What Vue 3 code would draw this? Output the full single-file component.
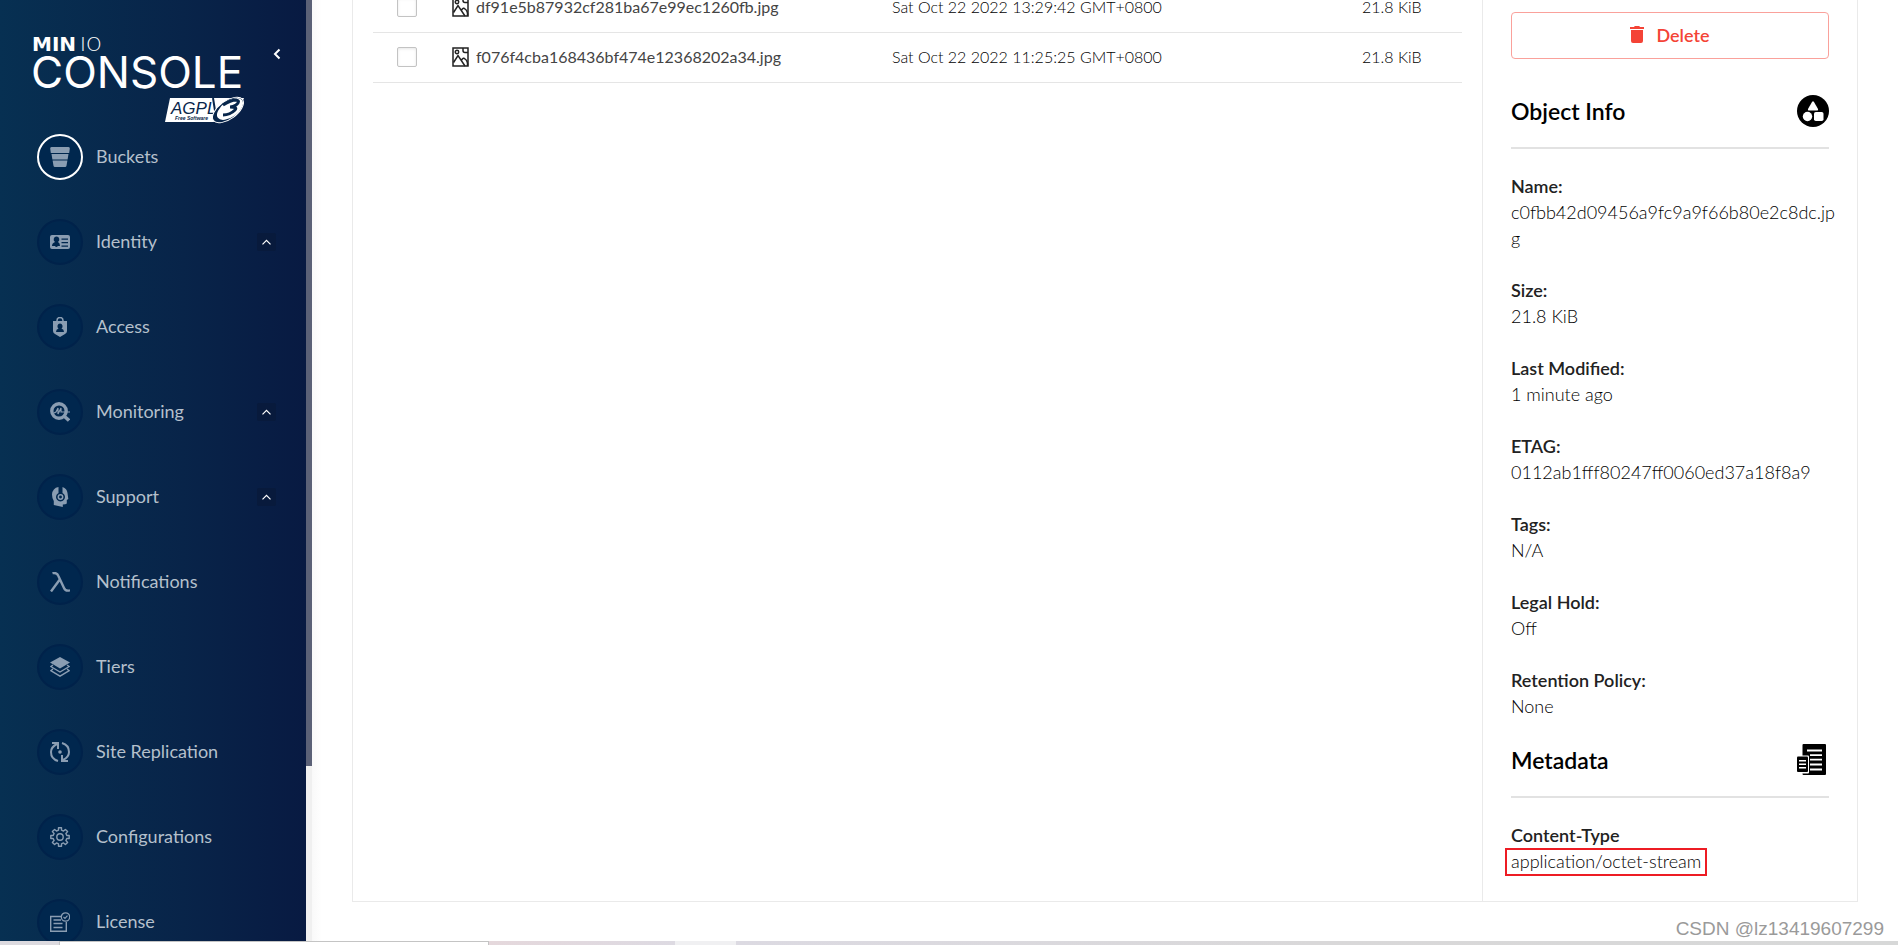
<script setup>
const navItems = [
  { label: 'Buckets', icon: 'buckets', active: true },
  { label: 'Identity', icon: 'identity', group: true },
  { label: 'Access', icon: 'access' },
  { label: 'Monitoring', icon: 'monitoring', group: true },
  { label: 'Support', icon: 'support', group: true },
  { label: 'Notifications', icon: 'lambda' },
  { label: 'Tiers', icon: 'tiers' },
  { label: 'Site Replication', icon: 'replication' },
  { label: 'Configurations', icon: 'gear' },
  { label: 'License', icon: 'license' },
]

const files = [
  { name: 'df91e5b87932cf281ba67e99ec1260fb.jpg', date: 'Sat Oct 22 2022 13:29:42 GMT+0800', size: '21.8 KiB' },
  { name: 'f076f4cba168436bf474e12368202a34.jpg', date: 'Sat Oct 22 2022 11:25:25 GMT+0800', size: '21.8 KiB' },
]

const info = [
  { label: 'Name:', value: 'c0fbb42d09456a9fc9a9f66b80e2c8dc.jpg' },
  { label: 'Size:', value: '21.8 KiB' },
  { label: 'Last Modified:', value: '1 minute ago' },
  { label: 'ETAG:', value: '0112ab1fff80247ff0060ed37a18f8a9' },
  { label: 'Tags:', value: 'N/A' },
  { label: 'Legal Hold:', value: 'Off' },
  { label: 'Retention Policy:', value: 'None' },
]
</script>

<template>
  <div class="page">
    <div class="shell">
      <aside class="sidebar">
        <div class="brand">
          <svg class="logo" viewBox="0 0 212 88" role="img" aria-label="MinIO Console AGPL v3">
            <text x="-1" y="15" class="logo-min">MIN</text>
            <text x="47" y="15" class="logo-io">IO</text>
            <text x="-2" y="52" class="logo-console">CONSOLE</text>
            <path d="M137 62H211L206 74Q196 86 180 86H132Z" fill="#fff" />
            <text x="138" y="78" class="logo-agpl">AGPL</text>
            <text x="142" y="84" class="logo-free">Free Software</text>
            <path d="M180 62l3 19L202 62" fill="none" stroke="#08264b" stroke-width="2" />
            <ellipse cx="195" cy="74" rx="18" ry="9" transform="rotate(-36 195 74)" fill="#08264b" stroke="#fff" />
            <ellipse cx="197" cy="73" rx="15" ry="8" transform="rotate(-36 197 73)" fill="#fff" />
            <path d="M190 69q8-5 13-5q5 1 0 5q-3 2-6 2q8 0 5 3q-5 5-12 5" fill="none" stroke="#08264b" stroke-width="3" />
          </svg>
          <button class="collapse" aria-label="Collapse menu">
            <svg width="8" height="12" viewBox="0 0 8 12"><path d="M6.500 1.500L2 6l4.500 4.500" fill="none" stroke="#fff" stroke-width="2" /></svg>
          </button>
        </div>
        <nav>
          <a v-for="item in navItems" :key="item.label" href="#" class="nav-item">
            <span class="nav-icon" :class="{ active: item.active }">
              <svg width="20" height="20" viewBox="0 0 20 20" fill="currentColor" aria-hidden="true">
                <template v-if="item.icon === 'buckets'">
                  <path d="M1.500 0h17q1.500 0 1.300 1.500L19.200 6H.8L.2 1.500Q0 0 1.500 0ZM1.500 7h17l-.9 5.500H2.400ZM2.600 13.500h14.800l-.9 5.200q-.2 1.300-1.500 1.300H5q-1.300 0-1.500-1.300Z" />
                </template>
                <template v-else-if="item.icon === 'identity'">
                  <path fill-rule="evenodd" d="M2 3h16q2 0 2 2v10q0 2-2 2H2q-2 0-2-2V5q0-2 2-2ZM6.500 4.500a3 3 0 0 0-1.500 5.500q-3 1-3 4h3q1 1.800 3 0h2q0-3-2-4a3 3 0 0 0-1.500-5.500ZM11.500 6.500v1.200H18V6.500ZM11.500 10v1.200H18V10ZM11.500 13.500v1.200H18v-1.200Z" />
                </template>
                <template v-else-if="item.icon === 'access'">
                  <path d="M7 5V3.500a3 3 0 0 1 6 0V5" fill="none" stroke="currentColor" stroke-width="1.500" />
                  <path fill-rule="evenodd" d="M3 4h14v10q0 2-2 3l-5 3-5-3q-2-1-2-3ZM10 6.500a2.800 2.800 0 0 0-1.500 5q-2.500.7-2.500 3.500h8q0-2.800-2.500-3.500a2.800 2.800 0 0 0-1.500-5Z" />
                </template>
                <template v-else-if="item.icon === 'monitoring'">
                  <circle cx="9" cy="9" r="7.200" fill="none" stroke="currentColor" stroke-width="3.400" />
                  <path d="M4 11l2-1 2-4v6l3-6v4h9" fill="none" stroke="currentColor" stroke-width="1.200" />
                  <path d="M14 14l5 4.500" stroke="currentColor" stroke-width="3.400" />
                </template>
                <template v-else-if="item.icon === 'support'">
                  <path d="M8.500 0v6a4.500 4.500 0 1 0 4 0V0q4.500 1.500 5 6l.8 6-1.500 1v3.500q-1 1-4 1V20l-9-2v-4Q2 11 2 7.500 2.500 1 8.500 0Z" />
                  <circle cx="10.500" cy="10" r="2.200" fill="none" stroke="currentColor" stroke-width="1.500" />
                </template>
                <template v-else-if="item.icon === 'lambda'">
                  <path d="M2.500 1.200q4.500-1 6 3L14 16q1.500 3.500 6 2.300M9.800 7.500L1 19.500" fill="none" stroke="currentColor" stroke-width="2.400" />
                </template>
                <template v-else-if="item.icon === 'tiers'">
                  <path d="M10 0l10 5.500L10 11.500 0 5.500Z" />
                  <path d="M3 8L.8 9.500 10 15l9.200-5.500L17 8M3 12L.8 13.700 10 19.200l9.200-5.500L17 12" fill="none" stroke="currentColor" stroke-width="1.400" />
                </template>
                <template v-else-if="item.icon === 'replication'">
                  <path d="M8 19Q1 17 1 10Q1 5 7 2M12 1Q19 3 19 10Q19 15 13 18" fill="none" stroke="currentColor" stroke-width="2" />
                  <path d="M2 1h6v6M18 19h-6v-6" fill="none" stroke="currentColor" stroke-width="2" />
                  <circle cx="10" cy="10" r="1.800" />
                </template>
                <template v-else-if="item.icon === 'gear'">
                  <path d="M8.500.8h3v2.400l2 .9 1.900-1.700 2.200 2.200-1.700 1.900.9 2h2.400v3h-2.400l-.9 2 1.700 1.900-2.200 2.200-1.900-1.700-2 .9v2.400h-3v-2.400l-2-.9-1.900 1.700-2.200-2.200 1.700-1.900-.9-2H.8v-3h2.400l.9-2-1.700-1.900 2.200-2.200 1.900 1.700 2-.9Z" fill="none" stroke="currentColor" stroke-width="1.400" stroke-linejoin="round" />
                  <circle cx="10" cy="10" r="3.200" fill="none" stroke="currentColor" stroke-width="1.400" />
                </template>
                <template v-else>
                  <path d="M11 4.500H.7v14.700h15.600V10M3.500 8H11M3.500 11.500h9M3.500 15.500h9" fill="none" stroke="currentColor" stroke-width="1.400" />
                  <circle cx="15.500" cy="5" r="4.200" fill="none" stroke="currentColor" stroke-width="1.300" />
                  <path d="M13.500 5l1.500 1.500 2.500-2.800" fill="none" stroke="currentColor" stroke-width="1.200" />
                </template>
              </svg>
            </span>
            <span class="nav-label">{{ item.label }}</span>
            <span v-if="item.group" class="chevron">
              <svg width="9" height="6" viewBox="0 0 9 6" aria-hidden="true"><path d="M.5 5.300l4-4 4 4" fill="none" stroke="#fff" stroke-width="1.200" /></svg>
            </span>
          </a>
        </nav>
      </aside>
      <div class="scrollbar"><div class="thumb"></div></div>

      <main class="content">
        <section class="browser">
          <div class="list">
            <table>
              <tbody>
                <tr v-for="f in files" :key="f.name">
                  <td class="c-check"><input type="checkbox" :aria-label="'Select ' + f.name" /></td>
                  <td class="c-name">
                    <span class="file">
                      <svg width="17" height="20" viewBox="0 0 17 20" fill="none" stroke="#222" stroke-width="1.500" aria-hidden="true">
                        <path d="M11 1H1v18h15V6M11 .5v3q0 2 2 2h3.500M11 1l5 0v5" />
                        <circle cx="5" cy="5" r="1.700" />
                        <path d="M1.500 15.500l4.500-7 7 10.500M9.500 13q2-3 3.500-1 3 2 2.500 7" />
                      </svg>
                      <span>{{ f.name }}</span>
                    </span>
                  </td>
                  <td class="c-date">{{ f.date }}</td>
                  <td class="c-size">{{ f.size }}</td>
                </tr>
              </tbody>
            </table>
          </div>

          <aside class="details">
            <button class="delete">
              <svg width="14" height="17" viewBox="0 0 14 17" fill="currentColor" aria-hidden="true"><path d="M0 1h4l.8-1h4.400L10 1h4v2H0ZM1 4h12v11q0 2-2 2H3q-2 0-2-2Z" /></svg>
              <span>Delete</span>
            </button>
            <header class="heading first">
              <h2>Object Info</h2>
              <svg width="32" height="32" viewBox="0 0 32 32" aria-hidden="true">
                <circle cx="16" cy="16" r="16" />
                <path d="M15 7q1-1.500 2 0l4 7q.6 1.500-1 1.500h-8q-1.600 0-1-1.500Z" fill="#fff" />
                <circle cx="10.500" cy="21.500" r="4.700" fill="#fff" />
                <rect x="17" y="17" width="9.500" height="9" rx="1.800" fill="#fff" />
              </svg>
            </header>
            <dl>
              <div v-for="row in info" :key="row.label">
                <dt>{{ row.label }}</dt>
                <dd>{{ row.value }}</dd>
              </div>
            </dl>
            <header class="heading">
              <h2>Metadata</h2>
              <svg width="32" height="32" viewBox="0 0 32 32" aria-hidden="true">
                <rect x="5.500" y="0" width="23.500" height="31" rx="1" />
                <path d="M10 6.500h15M13 11.200h12M13 15.700h12M13 20.500h12M13 25.500h12" stroke="#fff" stroke-width="1.800" />
                <rect x="-1" y="11.500" width="13" height="18" rx="1" fill="#fff" />
                <rect x="0" y="12.500" width="11" height="15.500" rx="1" />
                <path d="M2 16.800h7M2 20.300h7M2 23.800h7" stroke="#fff" stroke-width="1.400" />
              </svg>
            </header>
            <dl>
              <div>
                <dt>Content-Type</dt>
                <dd><span class="marked">application/octet-stream</span></dd>
              </div>
            </dl>
          </aside>
        </section>
      </main>
    </div>
    <div class="taskbar"><div class="tab"></div><div class="strip-a"></div><div class="strip-b"></div><div class="strip-c"></div></div>
    <div class="watermark">CSDN @lz13419607299</div>
  </div>
</template>

<style>
html, body { margin: 0; overflow: hidden; }
</style>

<style scoped>
* { box-sizing: border-box; }
.page { position: relative; height: 100vh; display: flex; flex-direction: column; overflow: hidden; background: #fff; font-family: Lato, "Liberation Sans", sans-serif; color: #222; }
.shell { flex: 1; min-height: 0; display: flex; overflow: hidden; }

.sidebar { flex: 0 0 306px; overflow: hidden; background: linear-gradient(90deg, #073052 0%, #082449 60%, #081a42 100%); }
.brand { display: flex; align-items: flex-start; justify-content: space-between; height: 134px; padding: 36px 25px 0 33px; }
.logo { width: 212px; height: 88px; overflow: visible; fill: #fff; }
.logo-min { font: 700 20px "DejaVu Sans", sans-serif; }
.logo-io { font: 200 20px "DejaVu Sans", sans-serif; }
.logo-console { font: 400 44px Inter, sans-serif; }
.logo-agpl { font: italic 400 17px "Liberation Sans", sans-serif; fill: #08264b; }
.logo-free { font: italic 700 5px "Liberation Sans", sans-serif; fill: #08264b; }
.collapse { display: flex; margin-top: 12px; padding: 0; border: 0; background: none; }
.nav-item { display: flex; align-items: center; height: 46px; margin-bottom: 39px; padding: 0 30px 0 37px; color: #b5c0cc; text-decoration: none; }
.nav-icon { flex: none; display: flex; align-items: center; justify-content: center; width: 46px; height: 46px; border: 2px solid #00224a; border-radius: 50%; background: #00274e; color: #8a9db2; }
.nav-icon.active { border-color: #fff; }
.nav-label { flex: 1; margin-left: 13px; padding-bottom: 2px; font-size: 18px; line-height: 24px; }
.chevron { display: flex; align-items: center; justify-content: center; width: 19px; height: 18px; border-radius: 2px; background: #081a3c; }

.scrollbar { flex: 0 0 6px; background: #f0f0f0; }
.thumb { height: 766px; background: #5b6177; }

.content { flex: 1; min-width: 0; padding: 0 40px 39px; background: linear-gradient(90deg, #f9f9f9 0, #fff 10px); }
.browser { display: flex; height: 100%; border: 1px solid #eaeaea; border-top: 0; }
.list { flex: 1; min-width: 0; padding: 0 20px; }
table { width: 100%; margin-top: -17px; border-collapse: separate; border-spacing: 0; table-layout: fixed; }
td { height: 50px; padding: 0 0 2px; border-bottom: 1px solid #e5e5e5; font-size: 16px; font-weight: 300; color: #000; white-space: nowrap; vertical-align: middle; }
.c-check { width: 79px; padding-left: 24px; }
.c-date { width: 470px; }
.c-size { width: 100px; }
.c-check input { display: block; appearance: none; width: 20px; height: 20px; margin: 0; border: 1px solid #c3c3c3; border-radius: 2px; background: #fff; box-shadow: inset 0 1px 3px rgba(0, 0, 0, 0.1); }
.file { display: flex; align-items: center; gap: 7px; font-weight: 400; color: #444; }

.details { flex: 0 0 375px; padding: 12px 28px 0; border-left: 1px solid #eaeaea; }
.delete { display: flex; align-items: center; justify-content: center; gap: 12px; width: 100%; height: 47px; padding: 0 0 2px; border: 1px solid #faa19b; border-radius: 4px; background: #fff; color: #f44336; font: 600 18px Lato, sans-serif; }
.heading { display: flex; align-items: center; justify-content: space-between; height: 54px; margin-top: 25px; padding-bottom: 20px; border-bottom: 2px solid #e2e2e2; color: #000; }
.heading.first { margin-top: 36px; }
h2 { margin: 0; font-size: 23px; line-height: 28px; font-weight: 600; }
dl { display: flex; flex-direction: column; gap: 26px; margin: 0; padding-top: 24px; }
dt, dd { margin: 0; font-size: 18px; line-height: 26px; color: #222; }
dt { font-weight: 600; }
dd { margin-right: -10px; overflow-wrap: anywhere; font-weight: 300; color: #000; }
.marked { margin: 0 -4px; padding: 0 4px 2px; outline: 2px solid #ed1c24; }

.taskbar { flex: 0 0 4px; display: flex; background: #dcdadf; }
.tab { width: 430px; margin-left: 59px; border: 1px solid #c4c4c4; border-bottom: 0; background: #fff; }
.strip-a { width: 186px; background: linear-gradient(90deg, #e5d8dc, #dddae2); }
.strip-b { width: 61px; background: #f0f0f2; }
.strip-c { flex: 1; background: linear-gradient(90deg, #dcdae2, #d9d8d9 50%, #d7d8d8); }
.watermark { position: absolute; right: 14px; bottom: 5px; font: 19px/22px "Liberation Sans", sans-serif; color: #9a9a9a; }
</style>
